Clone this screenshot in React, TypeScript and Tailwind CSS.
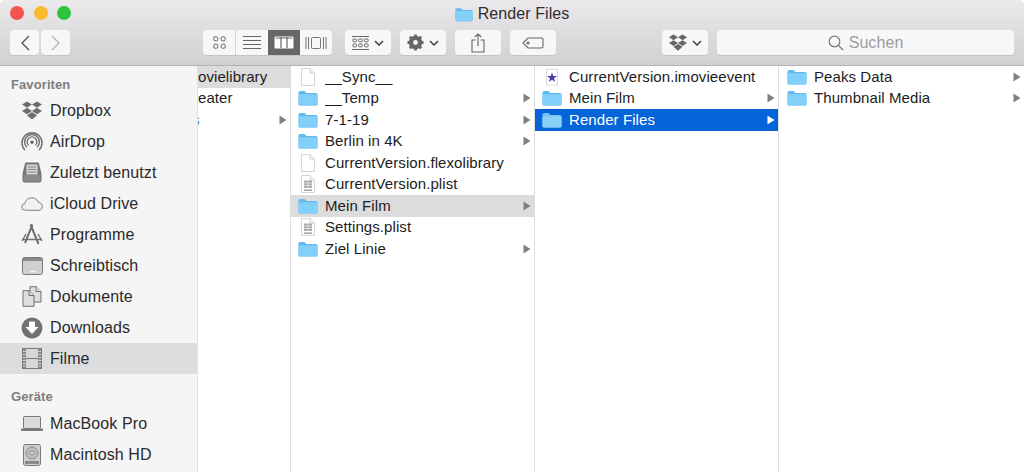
import React from "react";

const G = "#6d6d6d";

function Folder({ selected = false, w = 20, h = 16 }: { selected?: boolean; w?: number; h?: number }) {
  return (
    <svg width={w} height={h} viewBox="0 0 20 16" className="shrink-0">
      <path d="M0.5 2.5Q0.5 1 2 1H6.5L8.5 3H18Q19.5 3 19.5 4.5V14Q19.5 15.5 18 15.5H2Q0.5 15.5 0.5 14Z" fill={selected ? "#74c0f0" : "#62b9f0"} />
      <path d="M0.5 5Q0.5 4.2 1.5 4.2H18.5Q19.5 4.2 19.5 5V14Q19.5 15.5 18 15.5H2Q0.5 15.5 0.5 14Z" fill={selected ? "#8ad0f6" : "#82cffa"} />
    </svg>
  );
}

function Doc({ kind }: { kind: "blank" | "plist" | "star" }) {
  if (kind === "star") {
    return (
      <svg width="20" height="18" viewBox="0 0 20 18" className="shrink-0">
        <rect x="4.5" y="1" width="11" height="16" fill="#fff" stroke="#dcdcdc" />
        <path d="M10 4.5L11.3 8H15L12 10.3L13.1 14L10 11.8L6.9 14L8 10.3L5 8H8.7Z" fill="#4b3ba8" />
      </svg>
    );
  }
  return (
    <svg width="20" height="18" viewBox="0 0 20 18" className="shrink-0">
      <path d="M3.5 0.5H12L16.5 5V17.5H3.5Z" fill="#fff" stroke="#d4d4d4" />
      <path d="M12 0.5V5H16.5" fill="#f0f0f0" stroke="#d4d4d4" />
      {kind === "plist" && (
        <g>
          <rect x="6" y="5.5" width="8" height="7.5" fill="#a9a9a9" />
          <path d="M10 5.5V13M6 8H14M6 10.5H14" stroke="#e8e8e8" strokeWidth="0.8" />
          <rect x="6" y="14.5" width="8" height="1.4" fill="#9a9a9a" />
        </g>
      )}
    </svg>
  );
}

function Arrow({ white = false }: { white?: boolean }) {
  return (
    <svg width="8" height="10" viewBox="0 0 8 10" className="shrink-0">
      <path d="M0.5 0.5L7.5 5L0.5 9.5Z" fill={white ? "#fff" : "#808080"} />
    </svg>
  );
}

function Dropbox({ size = 22, color = G }: { size?: number; color?: string }) {
  return (
    <svg width={size} height={size * 0.86} viewBox="0 0 22 19">
      <path d="M6 0.5L11 3.6L6 6.8L1 3.6ZM16 0.5L21 3.6L16 6.8L11 3.6ZM6 6.8L11 10L6 13.2L1 10ZM16 6.8L21 10L16 13.2L11 10ZM11 11L16 14.2L11 18.5L6 14.2Z" fill={color} />
    </svg>
  );
}

function SideIcon({ name }: { name: string }) {
  const c = "#707070";
  switch (name) {
    case "Dropbox":
      return <Dropbox />;
    case "AirDrop":
      return (
        <svg width="22" height="22" viewBox="0 0 22 22" fill="none" stroke={c}>
          <path d="M4 19A10 10 0 1 1 18 19" strokeWidth="1.5" />
          <path d="M5.8 16.2A7.4 7.4 0 1 1 16.2 16.2" strokeWidth="1.4" />
          <path d="M7.6 14.4A4.9 4.9 0 1 1 14.4 14.4" strokeWidth="1.3" />
          <circle cx="11" cy="11.2" r="1.7" fill={c} stroke="none" />
        </svg>
      );
    case "Zuletzt benutzt":
      return (
        <svg width="20" height="21" viewBox="0 0 20 21">
          <path d="M3 1.5Q3 0.5 4 0.5H16Q17 0.5 17 1.5L19.5 12V18.5Q19.5 20.5 17.5 20.5H2.5Q0.5 20.5 0.5 18.5V12Z" fill="#777" />
          <rect x="4.5" y="2.5" width="11" height="10" fill="#d5d5d5" />
          <path d="M6 5H14M6 7.5H14M6 10H14" stroke="#888" />
          <rect x="2" y="13" width="16" height="6" rx="1" fill="#8a8a8a" />
        </svg>
      );
    case "iCloud Drive":
      return (
        <svg width="22" height="15" viewBox="0 0 22 15" fill="#f1f1f1" stroke="#808080">
          <path d="M4.5 14.3Q0.7 14.3 0.7 11Q0.7 8 4 7.6Q5 2 10.5 2Q15.5 1.6 17 6Q21.3 7 21.3 10.5Q21.3 14.3 17 14.3Z" />
        </svg>
      );
    case "Programme":
      return (
        <svg width="22" height="21" viewBox="0 0 22 21" fill="none" stroke={c}>
          <path d="M11.5 0.5L4 19M9.5 0.5L17.5 20" strokeWidth="2" />
          <path d="M1 15.5H21" strokeWidth="1.5" />
          <path d="M5 10L1 17M17 10L21 17" strokeWidth="1.4" />
        </svg>
      );
    case "Schreibtisch":
      return (
        <svg width="21" height="18" viewBox="0 0 21 18">
          <rect x="0.5" y="0.5" width="20" height="17" rx="2" fill="#d0d0d0" stroke="#777" />
          <rect x="1" y="1" width="19" height="3" fill="#8a8a8a" />
          <path d="M8 14.5H9.5M10 14.5H11.5M12 14.5H13.5" stroke="#fff" strokeWidth="1.3" />
        </svg>
      );
    case "Dokumente":
      return (
        <svg width="20" height="21" viewBox="0 0 20 21" fill="#dedede" stroke="#707070">
          <path d="M8 0.7H14L19 5.5V16H8Z" />
          <path d="M14 0.7V5.5H19" />
          <path d="M1 4.7H7L12 9.5V20.3H1Z" />
          <path d="M7 4.7V9.5H12" />
        </svg>
      );
    case "Downloads":
      return (
        <svg width="22" height="22" viewBox="0 0 22 22">
          <circle cx="11" cy="11" r="10.5" fill="#737373" />
          <path d="M8 4.5H14V10H17.5L11 17L4.5 10H8Z" fill="#fff" />
        </svg>
      );
    case "Filme":
      return (
        <svg width="20" height="21" viewBox="0 0 20 21">
          <rect x="0.5" y="0.5" width="19" height="20" fill="#d6d6d6" stroke="#777" />
          <rect x="0.5" y="0.5" width="3.5" height="20" fill="#888" />
          <rect x="16" y="0.5" width="3.5" height="20" fill="#888" />
          <path d="M4 10.5H16" stroke="#777" />
          <path d="M1 3.5H3.5M1 6.5H3.5M1 9.5H3.5M1 12.5H3.5M1 15.5H3.5M1 18H3.5M16.5 3.5H19M16.5 6.5H19M16.5 9.5H19M16.5 12.5H19M16.5 15.5H19M16.5 18H19" stroke="#ddd" />
        </svg>
      );
    case "MacBook Pro":
      return (
        <svg width="22" height="15" viewBox="0 0 22 15">
          <rect x="2.5" y="0.5" width="17" height="12" rx="1" fill="#d9d9d9" stroke="#777" />
          <rect x="0" y="12.5" width="22" height="2.5" rx="1" fill="#777" />
        </svg>
      );
    default:
      return (
        <svg width="20" height="22" viewBox="0 0 20 22">
          <rect x="1.5" y="0.5" width="17" height="21" rx="2" fill="#cfcfcf" stroke="#777" />
          <circle cx="10" cy="9" r="6" fill="#bdbdbd" stroke="#8a8a8a" />
          <circle cx="10" cy="9" r="2" fill="#e5e5e5" stroke="#8a8a8a" />
          <rect x="3" y="17" width="14" height="3" fill="#8a8a8a" />
        </svg>
      );
  }
}

function SideRow({ name, active = false }: { name: string; active?: boolean }) {
  return (
    <div className={`flex h-[31px] items-center ${active ? "bg-[#dcdddf]" : ""}`}>
      <div className="flex w-[50px] shrink-0 justify-center pl-[14px]">
        <SideIcon name={name} />
      </div>
      <span>{name}</span>
    </div>
  );
}

type Item = { name: string; type: "folder" | "blank" | "plist" | "star"; arrow?: boolean; state?: "gray" | "blue" };

function Row({ item }: { item: Item }) {
  const bg = item.state === "gray" ? "bg-[#dcdcdc]" : item.state === "blue" ? "bg-[#0464d8] text-white" : "";
  return (
    <div className={`flex h-[21.5px] items-center pl-[7px] pr-[3px] ${bg}`}>
      <div className="flex w-[27px] shrink-0">
        {item.type === "folder" ? <Folder selected={item.state === "blue"} /> : <Doc kind={item.type} />}
      </div>
      <span className="flex-1 truncate">{item.name}</span>
      {item.arrow && <Arrow white={item.state === "blue"} />}
    </div>
  );
}

function Column({ items }: { items: Item[] }) {
  return (
    <div className="w-[244px] shrink-0 border-r border-[#dedede]">
      {items.map((it) => (
        <Row key={it.name} item={it} />
      ))}
    </div>
  );
}

const btn = "flex h-[26px] items-center justify-center rounded-[4px] border-b border-[#c4c2c4] bg-[#f8f7f8]";

function Chevron() {
  return (
    <svg width="10" height="6" viewBox="0 0 10 6" fill="none" stroke="#3f3f3f" strokeWidth="1.5">
      <path d="M1 1L5 5L9 1" />
    </svg>
  );
}

const col2: Item[] = [
  { name: "__Sync__", type: "blank" },
  { name: "__Temp", type: "folder", arrow: true },
  { name: "7-1-19", type: "folder", arrow: true },
  { name: "Berlin in 4K", type: "folder", arrow: true },
  { name: "CurrentVersion.flexolibrary", type: "blank" },
  { name: "CurrentVersion.plist", type: "plist" },
  { name: "Mein Film", type: "folder", arrow: true, state: "gray" },
  { name: "Settings.plist", type: "plist" },
  { name: "Ziel Linie", type: "folder", arrow: true },
];
const col3: Item[] = [
  { name: "CurrentVersion.imovieevent", type: "star" },
  { name: "Mein Film", type: "folder", arrow: true },
  { name: "Render Files", type: "folder", arrow: true, state: "blue" },
];
const col4: Item[] = [
  { name: "Peaks Data", type: "folder", arrow: true },
  { name: "Thumbnail Media", type: "folder", arrow: true },
];

export default function App() {
  return (
    <div className="flex h-[472px] w-[1024px] flex-col overflow-hidden bg-white font-['Liberation_Sans',sans-serif] text-[15px] tracking-[0.08px] text-[#1c1c1c]">
      <header className="h-[66px] shrink-0 rounded-t-[5px] border-b border-[#b3b1b3] bg-gradient-to-b from-[#ebe9eb] to-[#d1cfd1]">
        <div className="relative flex h-[30px] items-start justify-center pt-[5px]">
          <div className="absolute left-[10px] top-[6px] flex gap-[9.5px]">
            <span className="h-[14px] w-[14px] rounded-full bg-[#f3544d]" />
            <span className="h-[14px] w-[14px] rounded-full bg-[#fbbb2e]" />
            <span className="h-[14px] w-[14px] rounded-full bg-[#2cc53f]" />
          </div>
          <div className="flex h-[18px] items-center gap-[5px] text-[16px] text-[#2e2e2e]">
            <Folder w={18} h={15} />
            <span>Render Files</span>
          </div>
        </div>
        <div className="flex px-[10px]">
          <div className="flex gap-[2px]">
            <div className={`${btn} w-[29px]`}>
              <svg width="10" height="16" viewBox="0 0 10 16" fill="none" stroke="#555" strokeWidth="1.4"><path d="M9 1L2 8L9 15" /></svg>
            </div>
            <div className={`${btn} w-[29px]`}>
              <svg width="10" height="16" viewBox="0 0 10 16" fill="none" stroke="#b5b5b5" strokeWidth="1.4"><path d="M1 1L8 8L1 15" /></svg>
            </div>
          </div>
          <div className="ml-[133px] flex h-[26px] w-[129px] overflow-hidden rounded-[4px] border-b border-[#c4c2c4] bg-[#f8f7f8]">
            <div className="flex w-[33px] items-center justify-center border-r border-[#d5d3d5]">
              <svg width="13" height="13" viewBox="0 0 13 13" fill="none" stroke="#666"><rect x="0.8" y="0.8" width="4" height="4" rx="1.2" /><rect x="8.2" y="0.8" width="4" height="4" rx="1.2" /><rect x="0.8" y="8.2" width="4" height="4" rx="1.2" /><rect x="8.2" y="8.2" width="4" height="4" rx="1.2" /></svg>
            </div>
            <div className="flex w-[32px] items-center justify-center">
              <svg width="18" height="13" viewBox="0 0 18 13" stroke="#666"><path d="M0 0.5H18M0 4.5H18M0 8.5H18M0 12.5H18" /></svg>
            </div>
            <div className="flex w-[32px] items-center justify-center bg-[#666666]">
              <svg width="20" height="13" viewBox="0 0 20 13"><rect x="0.5" y="0.5" width="19" height="12" rx="1" fill="#fff" /><path d="M7 1V12M13 1V12" stroke="#666" strokeWidth="1.2" /><rect x="1.5" y="1.5" width="17" height="1" fill="#666" /></svg>
            </div>
            <div className="flex flex-1 items-center justify-center">
              <svg width="22" height="14" viewBox="0 0 22 14" fill="none" stroke="#777"><rect x="6.5" y="1.5" width="9" height="11" rx="1" /><path d="M3.5 1V13M1 1V13M18.5 1V13M21 1V13" /></svg>
            </div>
          </div>
          <div className={`${btn} ml-[13px] w-[46px] gap-[5px]`}>
            <svg width="17" height="14" viewBox="0 0 17 14" fill="none" stroke="#666"><path d="M0 0.5H17M0 13.5H17" /><rect x="0.8" y="3" width="3.8" height="2.8" rx="1" /><rect x="6.6" y="3" width="3.8" height="2.8" rx="1" /><rect x="12.4" y="3" width="3.8" height="2.8" rx="1" /><rect x="0.8" y="8" width="3.8" height="2.8" rx="1" /><rect x="6.6" y="8" width="3.8" height="2.8" rx="1" /><rect x="12.4" y="8" width="3.8" height="2.8" rx="1" /></svg>
            <Chevron />
          </div>
          <div className={`${btn} ml-[9px] w-[46px] gap-[5px]`}>
            <svg width="17" height="17" viewBox="0 0 17 17">
              <circle cx="8.5" cy="8.5" r="4.8" fill="none" stroke="#666" strokeWidth="3.8" />
              <path d="M8.5 8.5L8.5 0.5M8.5 8.5L14.2 2.8M8.5 8.5L16.5 8.5M8.5 8.5L14.2 14.2M8.5 8.5L8.5 16.5M8.5 8.5L2.8 14.2M8.5 8.5L0.5 8.5M8.5 8.5L2.8 2.8" stroke="#666" strokeWidth="2.8" />
              <circle cx="8.5" cy="8.5" r="2.4" fill="#f8f7f8" />
            </svg>
            <Chevron />
          </div>
          <div className={`${btn} ml-[9px] w-[46px]`}>
            <svg width="14" height="20" viewBox="0 0 14 20" fill="none" stroke="#666" strokeWidth="1.1"><path d="M4.5 7H1V19H13V7H9.5" /><path d="M7 13V1M3.8 4L7 1L10.2 4" /></svg>
          </div>
          <div className={`${btn} ml-[9px] w-[46px]`}>
            <svg width="22" height="12" viewBox="0 0 22 12" fill="none" stroke="#666" strokeWidth="1.1"><path d="M6 1H19.5Q21 1 21 2.5V9.5Q21 11 19.5 11H6L1 6Z" /><circle cx="6" cy="6" r="1" /></svg>
          </div>
          <div className={`${btn} ml-[106px] w-[46px] gap-[4px]`}>
            <Dropbox size={20} color="#666" />
            <Chevron />
          </div>
          <div className={`${btn} ml-[9px] flex-1 gap-[5px] text-[16px] text-[#9c9c9c]`}>
            <svg width="16" height="16" viewBox="0 0 16 16" fill="none" stroke="#777" strokeWidth="1.2"><circle cx="6.5" cy="6.5" r="5.3" /><path d="M10.5 10.5L15 15" /></svg>
            <span>Suchen</span>
          </div>
        </div>
      </header>
      <main className="flex min-h-0 flex-1">
        <aside className="w-[198px] shrink-0 border-r border-[#e2e2e2] bg-[#f5f5f5] text-[16px] tracking-[0.1px] text-[#2a2a2a]">
          <div className="flex h-[29px] items-end pb-[1px] pl-[11px] text-[13px] font-bold text-[#7d7d7d]">Favoriten</div>
          {["Dropbox", "AirDrop", "Zuletzt benutzt", "iCloud Drive", "Programme", "Schreibtisch", "Dokumente", "Downloads"].map((n) => (
            <SideRow key={n} name={n} />
          ))}
          <SideRow name="Filme" active />
          <div className="flex h-[34px] items-end pb-[2px] pl-[11px] text-[13px] font-bold text-[#7d7d7d]">Geräte</div>
          <SideRow name="MacBook Pro" />
          <SideRow name="Macintosh HD" />
        </aside>
        <div className="w-[93px] shrink-0 overflow-hidden border-r border-[#dedede]">
          <div className="flex h-[21.5px] items-center bg-[#dcdcdc]">ovielibrary</div>
          <div className="flex h-[21.5px] items-center">eater</div>
          <div className="flex h-[21.5px] items-center justify-between pr-[3px]">
            <span className="-ml-[6px] text-[#3a6ea5]">s</span>
            <Arrow />
          </div>
        </div>
        <Column items={col2} />
        <Column items={col3} />
        <div className="flex-1 pl-[1px]">
          {col4.map((it) => (
            <Row key={it.name} item={it} />
          ))}
        </div>
      </main>
    </div>
  );
}
